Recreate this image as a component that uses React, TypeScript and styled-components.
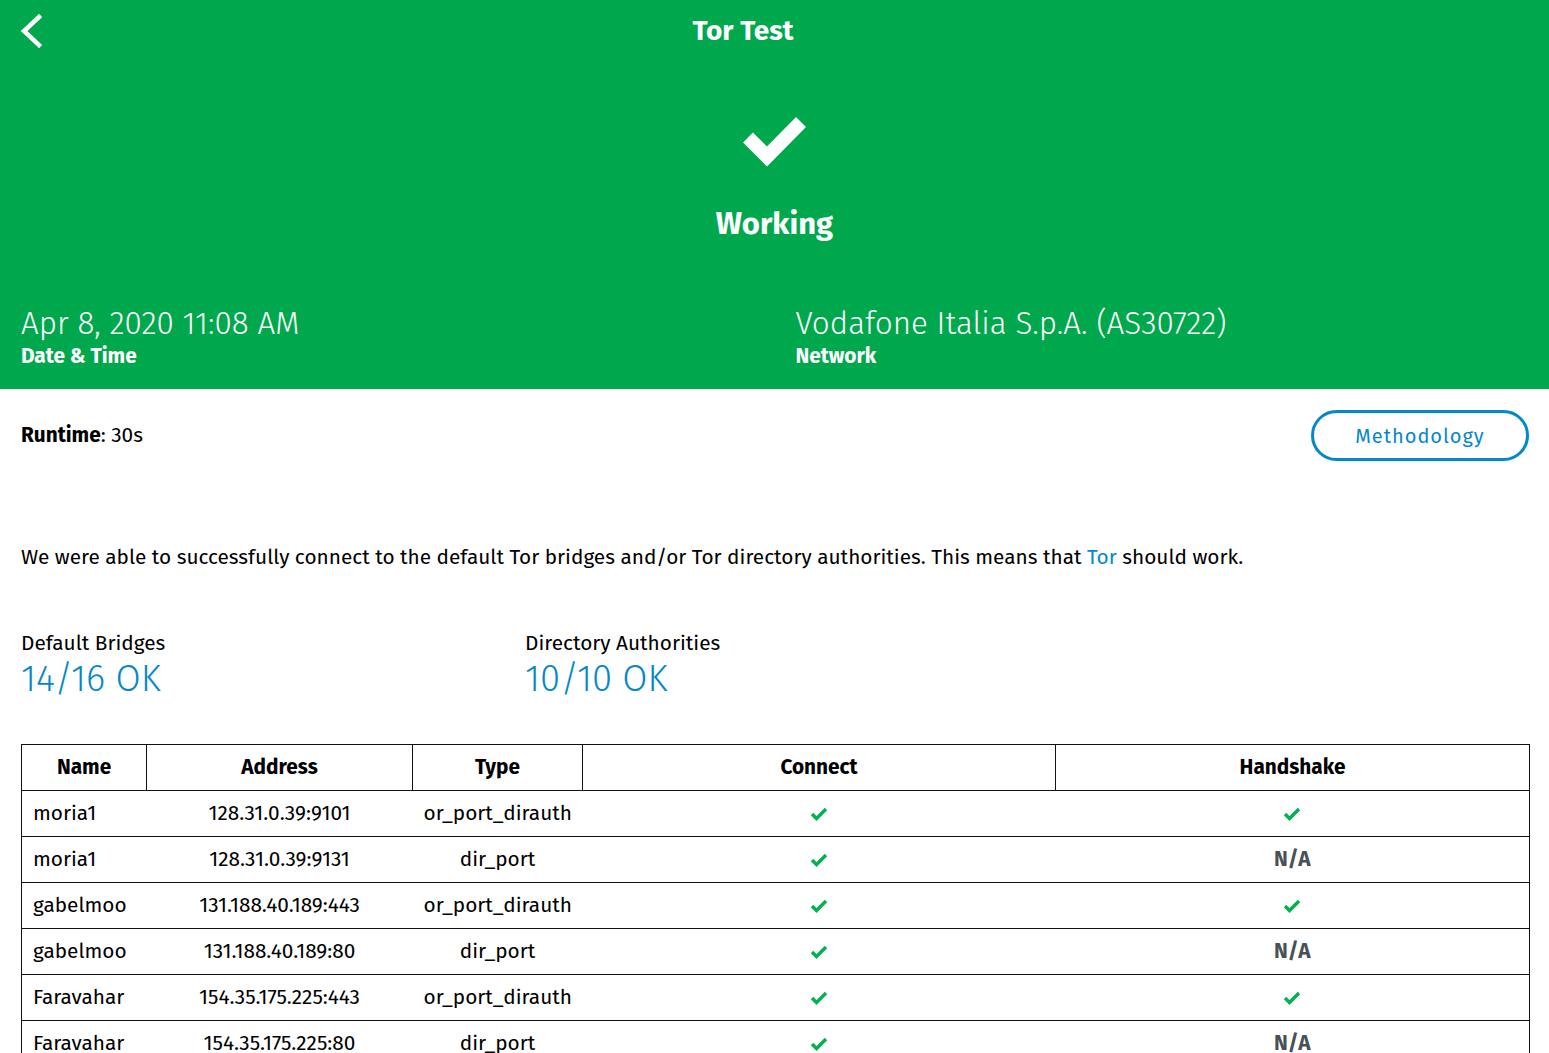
import React from "react";
import styled, { createGlobalStyle } from "styled-components";

const GREEN = "#00a84d";
const BLUE = "#0588cb";
const FONT = `"Fira Sans", "Open Sans", "Noto Sans", sans-serif`;

const Global = createGlobalStyle`
  html, body { margin: 0; padding: 0; background: #fff; }
  body { font-family: ${FONT}; color: #212529; }
  * { box-sizing: border-box; }
`;

const Page = styled.div`
  width: 1549px;
  min-height: 1053px;
`;

const Hero = styled.header`
  background: ${GREEN};
  color: #fff;
  height: 389px;
  display: flex;
  flex-direction: column;
`;

const TopBar = styled.div`
  display: flex;
  align-items: center;
  height: 62px;
`;

const BackButton = styled.button`
  width: 62px;
  height: 62px;
  border: 0;
  background: transparent;
  padding: 0 0 0 19px;
  display: flex;
  align-items: center;
  cursor: pointer;
`;

const Title = styled.h1`
  flex: 1;
  margin: 0;
  padding: 0 125px 2px 0;
  text-align: center;
  font-size: 28px;
  font-weight: 700;
`;

const StatusBlock = styled.div`
  display: flex;
  flex-direction: column;
  align-items: center;
  padding-top: 48px;
`;

const StatusText = styled.div`
  margin-top: 37px;
  font-size: 31px;
  font-weight: 700;
`;

const InfoRow = styled.div`
  display: grid;
  grid-template-columns: 1fr 1fr;
  margin-top: auto;
  padding-bottom: 20px;
`;

const InfoBox = styled.div`
  display: flex;
  flex-direction: column;
  padding: 0 21px;
`;

const InfoValue = styled.div`
  font-size: 31.4px;
  font-weight: 300;
  line-height: 36px;
`;

const InfoLabel = styled.div`
  margin-top: 3px;
  font-size: 20.8px;
  font-weight: 700;
  line-height: 24px;
`;

const Content = styled.main`
  padding: 21px 20px 0 21px;
`;

const RuntimeRow = styled.div`
  display: flex;
  align-items: center;
  justify-content: space-between;
`;

const Runtime = styled.div`
  font-size: 20.8px;
  color: #000;
  margin-top: 0;
  b { font-weight: 700; }
`;

const OutlineButton = styled.button`
  width: 218px;
  height: 51px;
  border: 3px solid ${BLUE};
  border-radius: 26px;
  background: #fff;
  color: ${BLUE};
  font-family: ${FONT};
  font-size: 20px;
  letter-spacing: 1px;
  cursor: pointer;
`;

const Description = styled.p`
  margin: 85px 0 0;
  font-size: 20.8px;
  line-height: 24px;
  color: #000;
`;

const Link = styled.a`
  color: ${BLUE};
  text-decoration: none;
`;

const Stats = styled.div`
  display: grid;
  grid-template-columns: 504px 504px;
  margin-top: 62px;
`;

const Stat = styled.div`
  display: flex;
  flex-direction: column;
`;

const StatLabel = styled.div`
  font-size: 20.8px;
  line-height: 24px;
  color: #000;
`;

const StatValue = styled.div`
  font-size: 36.5px;
  font-weight: 300;
  line-height: 46px;
  color: ${BLUE};
`;

const Table = styled.table`
  margin-top: 42px;
  width: 1508px;
  border-collapse: collapse;
  table-layout: fixed;
  border: 1px solid #111;
  font-size: 20.8px;
  color: #000;
`;

const Th = styled.th<{ $w: number }>`
  width: ${(p) => p.$w}px;
  height: 46px;
  border: 1px solid #111;
  font-weight: 700;
  text-align: center;
  padding: 0 12px;
`;

const Tr = styled.tr`
  border-top: 1px solid #111;
`;

const Td = styled.td<{ $left?: boolean }>`
  height: 46px;
  padding: 0 11px 1px;
  text-align: ${(p) => (p.$left ? "left" : "center")};
  white-space: nowrap;
`;

const NA = styled.span`
  font-weight: 700;
  color: #495057;
`;

const ChevronLeft = () => (
  <svg width="24" height="34" viewBox="0 0 24 34" fill="none">
    <polyline points="20,3 5,17 20,31" stroke="#fff" strokeWidth="4.5" strokeLinecap="square" />
  </svg>
);

const BigCheck = () => (
  <svg width="64" height="58" viewBox="0 0 64 58">
    <polyline points="5,27.5 24,46.5 58,12" fill="none" stroke="#fff" strokeWidth="14" />
  </svg>
);

const SmallCheck = () => (
  <svg width="18" height="14" viewBox="0 0 18 14" style={{ verticalAlign: "middle" }}>
    <polyline points="2,7 6.5,11.5 16,2" fill="none" stroke="#00b34f" strokeWidth="3.4" />
  </svg>
);

type Row = { name: string; address: string; type: string; handshake: boolean };

const rows: Row[] = [
  { name: "moria1", address: "128.31.0.39:9101", type: "or_port_dirauth", handshake: true },
  { name: "moria1", address: "128.31.0.39:9131", type: "dir_port", handshake: false },
  { name: "gabelmoo", address: "131.188.40.189:443", type: "or_port_dirauth", handshake: true },
  { name: "gabelmoo", address: "131.188.40.189:80", type: "dir_port", handshake: false },
  { name: "Faravahar", address: "154.35.175.225:443", type: "or_port_dirauth", handshake: true },
  { name: "Faravahar", address: "154.35.175.225:80", type: "dir_port", handshake: false },
];

export default function App() {
  return (
    <Page>
      <Global />
      <Hero>
        <TopBar>
          <BackButton aria-label="Back">
            <ChevronLeft />
          </BackButton>
          <Title>Tor Test</Title>
        </TopBar>
        <StatusBlock>
          <BigCheck />
          <StatusText>Working</StatusText>
        </StatusBlock>
        <InfoRow>
          <InfoBox>
            <InfoValue>Apr 8, 2020 11:08 AM</InfoValue>
            <InfoLabel>Date &amp; Time</InfoLabel>
          </InfoBox>
          <InfoBox>
            <InfoValue>Vodafone Italia S.p.A. (AS30722)</InfoValue>
            <InfoLabel>Network</InfoLabel>
          </InfoBox>
        </InfoRow>
      </Hero>
      <Content>
        <RuntimeRow>
          <Runtime>
            <b>Runtime</b>: 30s
          </Runtime>
          <OutlineButton>Methodology</OutlineButton>
        </RuntimeRow>
        <Description>
          We were able to successfully connect to the default Tor bridges and/or Tor directory authorities. This
          means that <Link href="#">Tor</Link> should work.
        </Description>
        <Stats>
          <Stat>
            <StatLabel>Default Bridges</StatLabel>
            <StatValue>14/16 OK</StatValue>
          </Stat>
          <Stat>
            <StatLabel>Directory Authorities</StatLabel>
            <StatValue>10/10 OK</StatValue>
          </Stat>
        </Stats>
        <Table>
          <thead>
            <tr>
              <Th $w={125}>Name</Th>
              <Th $w={266}>Address</Th>
              <Th $w={170}>Type</Th>
              <Th $w={473}>Connect</Th>
              <Th $w={474}>Handshake</Th>
            </tr>
          </thead>
          <tbody>
            {rows.map((r, i) => (
              <Tr key={i}>
                <Td $left>{r.name}</Td>
                <Td>{r.address}</Td>
                <Td>{r.type}</Td>
                <Td>
                  <SmallCheck />
                </Td>
                <Td>{r.handshake ? <SmallCheck /> : <NA>N/A</NA>}</Td>
              </Tr>
            ))}
          </tbody>
        </Table>
      </Content>
    </Page>
  );
}
